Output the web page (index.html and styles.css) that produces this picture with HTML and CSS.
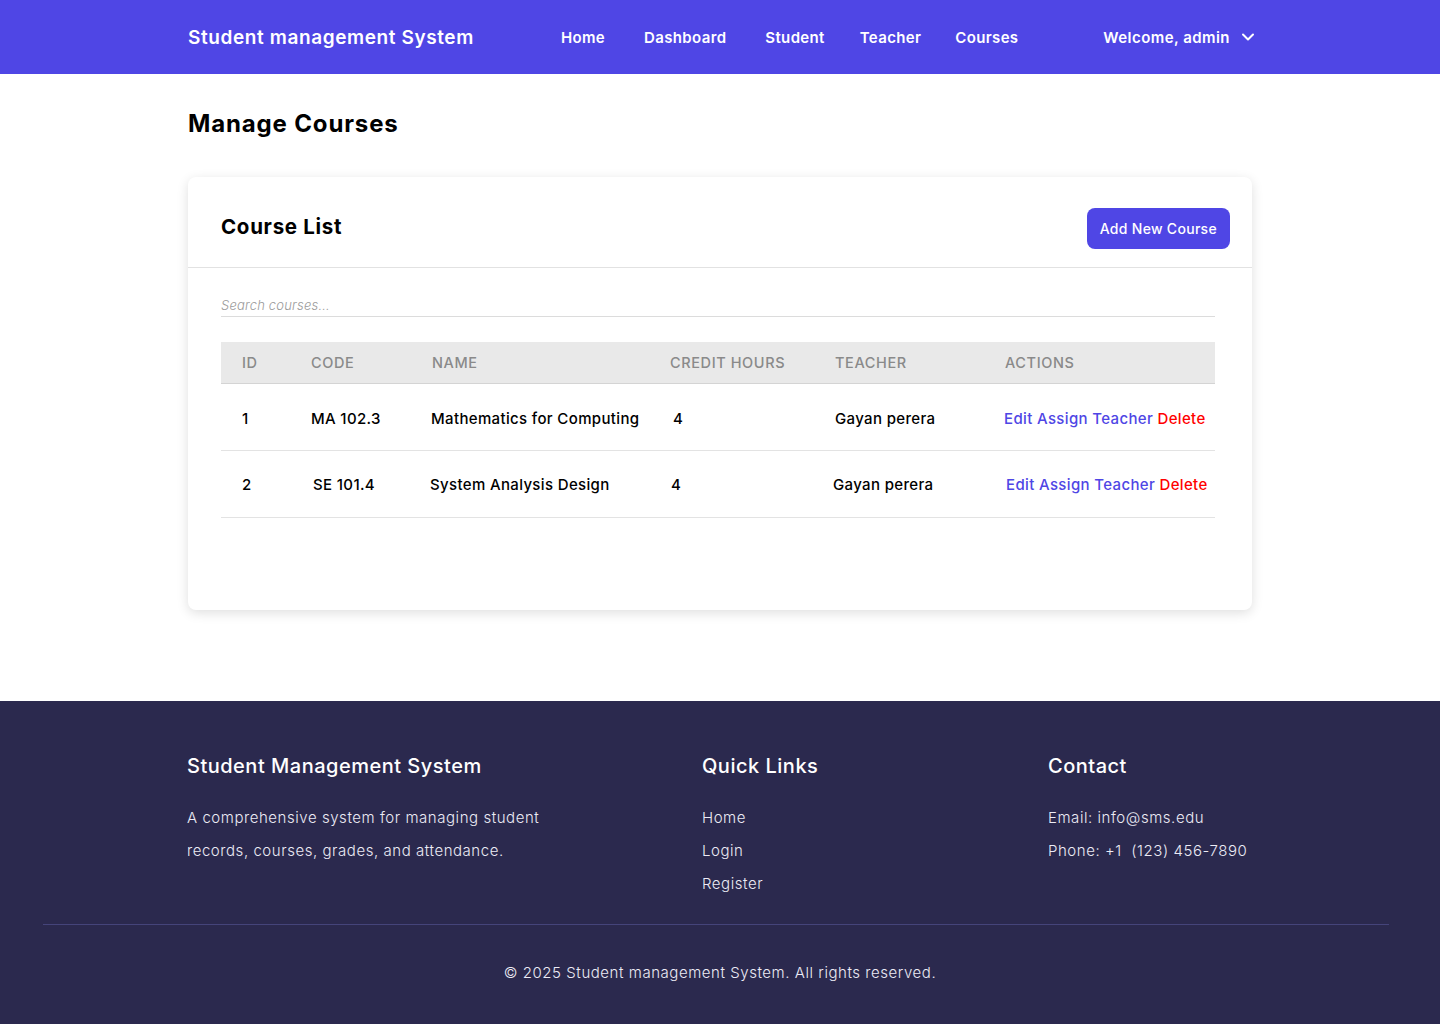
FILE: index.html
```html
<!DOCTYPE html>
<html lang="en">
<head>
<meta charset="utf-8">
<title>Manage Courses</title>
<link rel="stylesheet" href="styles.css">
</head>
<body>
<header class="topbar">
  <div class="topbar-inner">
    <div class="brand">Student management System</div>
    <nav class="nav">
      <a href="#">Home</a>
      <a href="#">Dashboard</a>
      <a href="#">Student</a>
      <a href="#">Teacher</a>
      <a href="#">Courses</a>
    </nav>
    <div class="user">
      <span>Welcome, admin</span>
      <svg class="chev" width="14" height="14" viewBox="0 0 14 14" fill="none" stroke="#fff" stroke-width="2" stroke-linecap="round" stroke-linejoin="round"><path d="M2 4.5 L7 9.5 L12 4.5"/></svg>
    </div>
  </div>
</header>

<main class="main">
  <h1 class="page-title">Manage Courses</h1>
  <section class="card">
    <div class="card-head">
      <h2 class="card-title">Course List</h2>
      <button class="btn">Add New Course</button>
    </div>
    <div class="card-body">
      <input class="search" type="text" placeholder="Search courses...">
      <table class="tbl">
        <colgroup>
          <col class="c-id"><col class="c-code"><col class="c-name"><col class="c-credit"><col class="c-teacher"><col class="c-actions">
        </colgroup>
        <thead>
          <tr><th>ID</th><th>Code</th><th>Name</th><th>Credit Hours</th><th>Teacher</th><th>Actions</th></tr>
        </thead>
        <tbody>
          <tr class="row1">
            <td>1</td><td>MA 102.3</td><td class="name1">Mathematics for Computing</td><td class="cr1">4</td><td>Gayan perera</td>
            <td class="act1"><a class="lnk">Edit</a> <a class="lnk">Assign Teacher</a> <a class="del">Delete</a></td>
          </tr>
          <tr class="row2">
            <td>2</td><td class="code2">SE 101.4</td><td class="name2">System Analysis Design</td><td class="cr2">4</td><td class="tch2">Gayan perera</td>
            <td class="act2"><a class="lnk">Edit</a> <a class="lnk">Assign Teacher</a> <a class="del">Delete</a></td>
          </tr>
        </tbody>
      </table>
    </div>
  </section>
</main>

<footer class="footer">
  <div class="footer-grid">
    <div class="fcol">
      <h3>Student Management System</h3>
      <p>A comprehensive system for managing student<br>records, courses, grades, and attendance.</p>
    </div>
    <div class="fcol">
      <h3>Quick Links</h3>
      <ul>
        <li><a href="#">Home</a></li>
        <li><a href="#">Login</a></li>
        <li><a href="#">Register</a></li>
      </ul>
    </div>
    <div class="fcol">
      <h3>Contact</h3>
      <p>Email: info@sms.edu<br>Phone: +1&nbsp; (123) 456-7890</p>
    </div>
  </div>
  <hr class="fdiv">
  <p class="copy">© 2025 Student management System. All rights reserved.</p>
</footer>
</body>
</html>
```

FILE: styles.css
```css
* { box-sizing: border-box; }
html, body { margin: 0; padding: 0; }
body {
  font-family: Inter, "Noto Sans", "Liberation Sans", sans-serif;
  color: #000;
  background: #fff;
}
a { text-decoration: none; color: inherit; }

.topbar {
  background: #4F46E5;
  height: 74px;
  color: #fff;
}
.topbar-inner {
  width: 1064px;
  margin: 0 auto;
  height: 100%;
  display: flex;
  align-items: center;
}
.brand {
  font-size: 19px;
  font-weight: 600;
  letter-spacing: 0.6px;
  width: 373px;
}
.nav {
  display: flex;
  font-size: 15px;
  font-weight: 600;
  letter-spacing: 0.35px;
}
.nav a:nth-child(1) { margin-right: 39px; }
.nav a:nth-child(2) { margin-right: 39px; }
.nav a:nth-child(3) { margin-right: 35px; }
.nav a:nth-child(4) { margin-right: 34px; }
.user {
  margin-left: auto;
  display: flex;
  align-items: center;
  gap: 11px;
  font-size: 15px;
  font-weight: 600;
  letter-spacing: 0.45px;
  margin-right: -3px;
}
.chev { display: block; }

.main {
  width: 1064px;
  margin: 0 auto;
  padding: 35px 0 91px;
}
.page-title {
  margin: 0 0 38px;
  font-size: 24px;
  line-height: 30px;
  font-weight: 700;
  letter-spacing: 0.85px;
}
.card {
  background: #fff;
  border-radius: 8px;
  box-shadow: 0 3px 12px rgba(0,0,0,0.13);
}
.card-head {
  display: flex;
  align-items: center;
  justify-content: space-between;
  padding: 31px 22px 18px 33px;
  border-bottom: 1px solid #e2e2e2;
}
.card-title {
  margin: 0 0 4px;
  font-size: 20.5px;
  font-weight: 700;
  letter-spacing: 0.7px;
}
.btn {
  background: #4F46E5;
  color: #fff;
  border: 0;
  border-radius: 8px;
  height: 41px;
  padding: 0 13px;
  font-family: inherit;
  font-size: 14px;
  font-weight: 500;
  letter-spacing: 0.3px;
}
.card-body {
  padding: 24px 37px 92px 33px;
}
.search {
  display: block;
  width: 100%;
  height: 25px;
  border: 0;
  border-bottom: 1px solid #dcdcdc;
  padding: 2px 0 0;
  font-family: inherit;
  font-size: 13px;
  font-style: italic;
  font-weight: 300;
  letter-spacing: 0.2px;
  outline: none;
}
.search::placeholder { color: #9a9a9a; }

.tbl {
  margin-top: 25px;
  width: 994px;
  border-collapse: collapse;
  table-layout: fixed;
}
.c-id { width: 69px; }
.c-code { width: 121px; }
.c-name { width: 238px; }
.c-credit { width: 165px; }
.c-teacher { width: 170px; }
.c-actions { width: 231px; }
.tbl th {
  background: #e9e9e9;
  height: 41px;
  text-align: left;
  padding: 0 0 0 21px;
  font-size: 14.5px;
  font-weight: 500;
  color: #8a8a8a;
  text-transform: uppercase;
  letter-spacing: 0.6px;
  border-bottom: 1px solid #d4d4d4;
}
.tbl td {
  height: 67px;
  padding: 0 0 0 21px;
  font-size: 15px;
  font-weight: 500;
  letter-spacing: 0.35px;
  border-bottom: 1px solid #e3e3e3;
  white-space: nowrap;
}
.tbl .row1 td { padding-top: 4px; }
.tbl .row2 td { padding-top: 2px; }
.tbl td.name1 { padding-left: 20px; }
.tbl td.name2 { padding-left: 19px; }
.tbl td.cr1 { padding-left: 24px; }
.tbl td.cr2 { padding-left: 22px; }
.tbl td.tch2 { padding-left: 19px; }
.tbl td.code2 { padding-left: 23px; }
.tbl td.act1 { padding-left: 20px; }
.tbl td.act2 { padding-left: 22px; }
.lnk { color: #4F46E5; }
.del { color: #ff0000; }

.footer {
  background: #2B294E;
  color: #fff;
  padding-top: 53px;
}
.footer-grid {
  width: 1066px;
  margin: 0 auto;
  display: grid;
  grid-template-columns: 515px 346px 1fr;
  padding-bottom: 24px;
}
.fcol h3 {
  margin: 0 0 23px;
  font-size: 20px;
  line-height: 24px;
  font-weight: 500;
  letter-spacing: 0.5px;
}
.fcol p,
.fcol ul {
  margin: 0;
  padding: 0;
  list-style: none;
  font-size: 15px;
  line-height: 33px;
  font-weight: 300;
  letter-spacing: 0.55px;
  color: #ecebf5;
}
.fdiv {
  margin: 0 51px 0 43px;
  border: 0;
  border-top: 1px solid #45447a;
  height: 0;
}
.copy {
  margin: 31px 0 0;
  padding-bottom: 35px;
  text-align: center;
  font-size: 15px;
  line-height: 33px;
  font-weight: 300;
  letter-spacing: 0.55px;
  color: #ecebf5;
}
```
